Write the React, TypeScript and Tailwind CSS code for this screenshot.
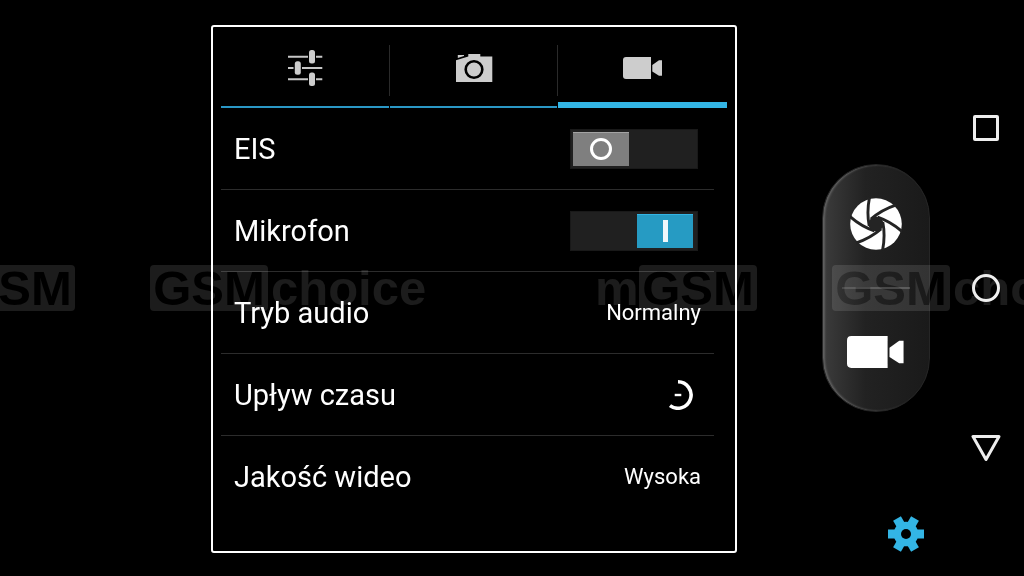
import { useState } from 'react';
import type { ReactNode } from 'react';
import clsx from 'clsx';

const BLADES = [0, 60, 120, 180, 240, 300];

function SlidersIcon() {
  return (
    <svg width="36" height="36" viewBox="0 0 36 36" aria-hidden="true">
      <g stroke="#c6c6c6" strokeWidth="2">
        <path d="M1 6.7H21M29 6.7H35.3M1 18H6.500M15 18H35.300M1 29.300H21M29 29.300H35.300" />
      </g>
      <g fill="#cdcdcd">
        <rect x="22" y="0" width="6" height="13.500" rx="2.500" />
        <rect x="7.800" y="11.300" width="6" height="13.500" rx="2.500" />
        <rect x="22" y="22.500" width="6" height="13.500" rx="2.500" />
      </g>
    </svg>
  );
}

function CameraIcon() {
  return (
    <svg width="38" height="30" viewBox="0 0 38 30" aria-hidden="true">
      <path
        d="M1 7.200L13.300 3.600V1H25.300V3.600H37.300V29H1Z"
        fill="#cdcdcd"
      />
      <path d="M2.800 2H9V3L2.800 5Z" fill="#cdcdcd" />
      <circle cx="19" cy="16.500" r="8.300" fill="#cdcdcd" stroke="#000" strokeWidth="2.600" />
    </svg>
  );
}

function VideoIcon({ className, fill }: { className: string; fill: string }) {
  return (
    <svg className={className} viewBox="0 0 40 22" aria-hidden="true">
      <path d="M3 0H28V22H3Q0 22 0 19V3Q0 0 3 0Z" fill={fill} />
      <path d="M39 3.300V18.700H36L29.300 14.500V8L36 3.300Z" fill={fill} />
    </svg>
  );
}

function ShutterIcon() {
  return (
    <svg width="52" height="52" viewBox="-26 -26 52 52" aria-hidden="true">
      <circle r="25.800" fill="#fff" />
      {BLADES.map((angle) => (
        <path
          key={angle}
          d="M-6.500 -26.500Q-9.500 -12 -6.800 2"
          fill="none"
          stroke="#242424"
          strokeWidth="2.900"
          transform={`rotate(${angle})`}
        />
      ))}
      <circle r="7.500" fill="#242424" />
    </svg>
  );
}

function GearIcon() {
  return (
    <svg width="36" height="36" viewBox="-18 -18 36 36" aria-hidden="true">
      <g fill="#33b5e5">
        <circle r="12.300" />
        <rect x="-18" y="-4.500" width="36" height="9" />
        <rect x="-18" y="-4.500" width="36" height="9" transform="rotate(60)" />
        <rect x="-18" y="-4.500" width="36" height="9" transform="rotate(120)" />
      </g>
      <circle r="5" fill="#000" />
    </svg>
  );
}

function TimeLapseIcon() {
  return (
    <svg width="30" height="30" viewBox="-15 -15 30 30" fill="none" stroke="#fff" aria-hidden="true">
      <path d="M0 -13.200A13.200 13.200 0 1 1 -8 10.600" strokeWidth="3.600" />
      <path d="M-3.300 0H3.300" strokeWidth="2.400" />
    </svg>
  );
}

function Toggle({ id, defaultOn = false }: { id: string; defaultOn?: boolean }) {
  const [on, setOn] = useState(defaultOn);

  return (
    <span className="mr-[3px] grid h-10 w-32 items-center">
      <input
        id={id}
        type="checkbox"
        role="switch"
        checked={on}
        onChange={() => setOn(!on)}
        className="col-start-1 row-start-1 h-10 w-32 appearance-none border border-[#191919] bg-[#202020]"
      />
      <span
        className={clsx(
          'pointer-events-none z-10 col-start-1 row-start-1 mr-[5px] ml-[3px] flex h-[34px] w-14 items-center justify-center border-t',
          on
            ? 'justify-self-end border-[#33b5e5] bg-[#269bc3]'
            : 'justify-self-start border-[#a3a3a3] bg-[#7f7f7f]'
        )}
      >
        {on ? (
          <span className="h-[22px] w-[5px] bg-[#f0f8fb]" />
        ) : (
          <span className="size-[22px] rounded-full border-3 border-white" />
        )}
      </span>
    </span>
  );
}

function SettingRow({ id, label, children }: { id: string; label: string; children: ReactNode }) {
  return (
    <li className="flex h-[82px] items-center justify-between border-b border-[#2c2c2c] px-[13px] last:border-b-0">
      <label htmlFor={id} className="text-[29px] leading-9">
        {label}
      </label>
      {children}
    </li>
  );
}

function GsmBox() {
  return <span className="flex h-[46px] w-[118px] items-center justify-center rounded bg-[#1c1c1c] text-black">GSM</span>;
}

// Repeats across the whole width; the black letters drop out when blended
function Watermark() {
  return (
    <div
      aria-hidden="true"
      className="pointer-events-none absolute inset-x-0 top-1/2 z-20 flex -translate-y-1/2 overflow-hidden font-['Liberation_Sans',sans-serif] text-[49px] leading-[46px] font-bold text-[#1c1c1c] mix-blend-screen"
    >
      <div className="-ml-[87px] flex shrink-0">
        {[0, 1].map((i) => (
          <div key={i} className="flex w-[682px] shrink-0">
            <span className="w-11">m</span>
            <GsmBox />
            <span className="w-[75px]" />
            <GsmBox />
            <span className="pl-[3px]">choice</span>
          </div>
        ))}
      </div>
    </div>
  );
}

const TABS = [
  { id: 'general', label: 'Ogólne', icon: <SlidersIcon /> },
  { id: 'photo', label: 'Aparat', icon: <CameraIcon /> },
  { id: 'video', label: 'Wideo', icon: <VideoIcon className="h-[22px] w-10" fill="#cdcdcd" /> },
];

function App() {
  const [tab, setTab] = useState('video');

  return (
    <div className="relative grid min-h-screen grid-cols-[211fr_526fr_287fr] overflow-hidden bg-black font-[Roboto,sans-serif] text-white">
      {/* Settings panel */}
      <main className="col-start-2 mt-[25px] mb-[23px] rounded-[3px] border-2 border-white px-2">
        <div role="tablist" className="flex h-[81px]">
          {TABS.map(({ id, label, icon }) => (
            <div key={id} className="group flex flex-1">
              <button
                role="tab"
                aria-selected={tab === id}
                aria-label={label}
                onClick={() => setTab(id)}
                className={clsx(
                  'flex flex-1 items-center justify-center',
                  tab === id
                    ? 'shadow-[inset_0_-6px_0_#33b5e5]'
                    : 'shadow-[inset_0_-2px_0_#2a97c5]'
                )}
              >
                {icon}
              </button>
              <span className="mt-[18px] mb-3 w-px bg-[#2a2a2a] group-last:hidden" />
            </div>
          ))}
        </div>

        <ul className="mr-[13px]">
          <SettingRow id="eis" label="EIS">
            <Toggle id="eis" />
          </SettingRow>
          <SettingRow id="microphone" label="Mikrofon">
            <Toggle id="microphone" defaultOn />
          </SettingRow>
          <SettingRow id="audio-mode" label="Tryb audio">
            <button id="audio-mode" className="text-[22px] leading-9">Normalny</button>
          </SettingRow>
          <SettingRow id="time-lapse" label="Upływ czasu">
            <button id="time-lapse" className="pr-2">
              <TimeLapseIcon />
            </button>
          </SettingRow>
          <SettingRow id="video-quality" label="Jakość wideo">
            <button id="video-quality" className="text-[22px] leading-9">Wysoka</button>
          </SettingRow>
        </ul>
      </main>

      <aside className="flex justify-end gap-[17px]">
        {/* Capture controls */}
        <div className="grid w-[108px] grid-rows-[1fr_auto_1fr]">
          <div className="row-start-2 grid h-[248px] grid-rows-[1fr_auto_1fr] items-center justify-items-center gap-y-1 rounded-full border border-[#262626] bg-linear-to-r from-[#3c3c3c] via-[#222222] via-40% to-[#1a1a1a] shadow-[inset_2px_0_2px_#606060]">
            <button aria-label="Zrób zdjęcie">
              <ShutterIcon />
            </button>
            <span className="h-[2px] w-[68px] bg-[#484848]" />
            <button aria-label="Nagraj wideo">
              <VideoIcon className="h-8 w-[58px]" fill="#fff" />
            </button>
          </div>
          <button aria-label="Ustawienia" className="row-start-3 mr-[6px] mb-6 self-end justify-self-end">
            <GearIcon />
          </button>
        </div>

        {/* System navigation */}
        <nav className="flex w-[77px] flex-col items-center justify-center gap-[132px]">
          <button aria-label="Ostatnie" className="flex size-7 items-center justify-center">
            <span className="size-[26px] rounded-[2px] border-3 border-[#eeeeee]" />
          </button>
          <button aria-label="Ekran główny" className="flex size-7 items-center justify-center">
            <span className="size-7 rounded-full border-3 border-[#eeeeee]" />
          </button>
          <button aria-label="Wstecz" className="flex size-7 items-center justify-center">
            <svg width="30" height="28" viewBox="0 0 30 28" className="shrink-0" aria-hidden="true">
              <path d="M2 2.500H28L15 25.500Z" fill="none" stroke="#eee" strokeWidth="3" strokeLinejoin="round" />
            </svg>
          </button>
        </nav>
      </aside>

      <Watermark />
    </div>
  );
}

export default App;
